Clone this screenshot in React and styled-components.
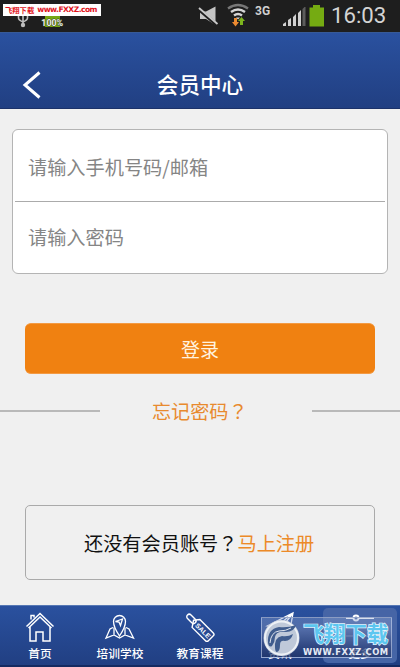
import React from "react";
import styled, { createGlobalStyle } from "styled-components";

const GlobalStyle = createGlobalStyle`
  * {
    box-sizing: border-box;
  }
  body {
    margin: 0;
    font-family: "Noto Sans CJK SC", "Liberation Sans", sans-serif;
    background-color: #f0f0f0;
  }
`;

const Screen = styled.div`
  position: relative;
  display: flex;
  flex-direction: column;
  width: 400px;
  height: 667px;
  overflow: hidden;
  background-color: #f0f0f0;
`;

const StatusBar = styled.div`
  position: relative;
  display: flex;
  justify-content: space-between;
  height: 32px;
  flex: none;
  background-color: #1e1e1e;

  svg {
    display: block;
  }
`;

const StatusRight = styled.div`
  display: flex;
  align-items: flex-start;
`;

const Clock = styled.div`
  width: 69px;
  color: #d4d4d4;
  font-family: Roboto, sans-serif;
  font-size: 22.2px;
  line-height: 31px;
`;

const SiteTag = styled.div`
  position: absolute;
  left: 3px;
  top: 4px;
  width: 98px;
  height: 12px;
  padding-left: 2px;
  display: flex;
  align-items: center;
  gap: 3px;
  background-color: #fff;
  color: #e0131c;
  font-size: 7.3px;
  font-weight: 700;
  line-height: 12px;
  white-space: nowrap;
`;

const SiteTagUrl = styled.span`
  font-family: "DejaVu Sans", sans-serif;
  font-size: 7.6px;
  font-weight: 700;
  letter-spacing: -0.55px;
`;

const Header = styled.header`
  display: grid;
  grid-template-columns: 60px 1fr 60px;
  align-items: center;
  height: 77px;
  flex: none;
  padding-top: 27px;
  border-top: 1px solid #375a97;
  border-bottom: 1px solid #1c3269;
  background: linear-gradient(#2a519f, #213f82);
`;

const BackButton = styled.button`
  padding: 1px 0 0 22px;
  border: none;
  background: none;

  svg {
    display: block;
  }
`;

const Title = styled.h1`
  margin: 0;
  color: #fff;
  font-size: 21.6px;
  font-weight: 500;
  line-height: 30px;
  text-align: center;
`;

const Content = styled.main`
  display: flex;
  flex-direction: column;
  flex: 1;
`;

const Fields = styled.div`
  height: 145px;
  margin: 20px 12px 0;
  padding: 0 2px;
  border: 1px solid #b4b4b4;
  border-radius: 6px;
  background-color: #fff;
`;

const Field = styled.input`
  display: block;
  width: 100%;
  height: ${(props) => (props.$divided ? "72px" : "71px")};
  padding: ${(props) => (props.$divided ? "2px 13px 0" : "0 13px 2px")};
  border: none;
  border-bottom: ${(props) => (props.$divided ? "1px solid #ababab" : "none")};
  outline: none;
  background: none;
  font-family: inherit;
  font-size: 19.2px;

  &::placeholder {
    color: #858585;
    opacity: 1;
  }
`;

const LoginButton = styled.button`
  height: 51px;
  margin: 49px 25px 0;
  padding: 1px 0 0;
  border: none;
  border-top: 1px solid #f39a43;
  border-bottom: 1px solid #f39a43;
  border-radius: 6px;
  background-color: #f08111;
  color: #fff3e0;
  font-family: inherit;
  font-size: 19px;
  line-height: 48px;
`;

const Forgot = styled.div`
  display: grid;
  grid-template-columns: 100px 1fr 88px;
  align-items: center;
  height: 28px;
  margin-top: 23px;
`;

const Rule = styled.span`
  height: 2px;
  background-color: #b9b9b9;
`;

const ForgotLink = styled.a`
  padding-left: 52px;
  color: #e88a2e;
  font-size: 19.1px;
  line-height: 28px;
`;

// the JP face centres the full-width question mark in its cell
const Mark = styled.span`
  font-family: "Noto Sans CJK JP", sans-serif;
`;

const RegisterBox = styled.div`
  display: flex;
  align-items: center;
  height: 75px;
  margin: 80px 25px 0;
  padding: 0 0 0 58px;
  border: 1px solid #aaa;
  border-radius: 5px;
  color: #111;
  font-size: 19.2px;
  white-space: nowrap;
`;

const RegisterLink = styled.a`
  color: #ec8a28;
`;

const TabBar = styled.nav`
  display: grid;
  grid-template-columns: repeat(5, 1fr);
  height: 62px;
  flex: none;
  border-top: 1px solid #5678b4;
  border-bottom: 2px solid #142a61;
  background: linear-gradient(#2a519f, #213f82);
`;

const Tab = styled.a`
  display: flex;
  flex-direction: column;
  align-items: center;
  margin: ${(props) => (props.$active ? "2px 3px" : "2px 0")};
  padding-top: 2px;
  border-radius: 5px;
  background-color: ${(props) => (props.$active ? "#4665a6" : "transparent")};
  color: #fff;
  font-size: 11.7px;
  font-weight: 500;
  line-height: 18px;
  white-space: nowrap;

  svg {
    flex: none;
    margin-bottom: 2px;
  }
`;

const Watermark = styled.div`
  position: absolute;
  left: 261px;
  top: 617px;
  width: 131px;
  height: 41px;
  display: flex;
  align-items: center;
  border: 1px solid rgba(190, 205, 235, 0.65);
  background: linear-gradient(
    rgba(150, 172, 215, 0.35),
    rgba(110, 130, 180, 0.6) 30%,
    rgba(50, 70, 125, 0.75) 75%,
    rgba(30, 50, 100, 0.7)
  );

  svg {
    flex: none;
  }
`;

const WatermarkText = styled.div`
  display: flex;
  flex-direction: column;
  margin-left: 1px;
`;

const WatermarkName = styled.span`
  height: 28px;
  color: #5cc6f0;
  font-size: 21.3px;
  font-weight: 700;
  line-height: 28px;
  white-space: nowrap;
  -webkit-text-stroke: 1.4px #e4f6ff;
  paint-order: stroke fill;
`;

const WatermarkUrl = styled.span`
  color: #e6ebf5;
  font-family: "DejaVu Sans", sans-serif;
  font-size: 8.4px;
  font-weight: 700;
  line-height: 10px;
  letter-spacing: 0.5px;
  white-space: nowrap;
`;

const StatusLeftIcons = () => (
  <svg width="70" height="32" viewBox="0 0 70 32">
    <g fill="none" stroke="#bdbdbd" strokeWidth="1.6">
      <path d="M23 13v12M18.500 15v3q0 2 4.500 4M27.500 15v3q0 2-4.500 4" />
    </g>
    <circle cx="23" cy="25" r="2.200" fill="#bdbdbd" />
    <path d="M45 14h15v13h-15z" fill="#75a813" />
    <text
      x="52.200"
      y="26"
      textAnchor="middle"
      fontFamily="Roboto"
      fontSize="8.800"
      fontWeight="700"
      fill="#eee"
      stroke="#3a4a1a"
      strokeWidth="1"
      paintOrder="stroke"
    >
      100%
    </text>
  </svg>
);

const StatusRightIcons = () => (
  <svg width="136" height="32" viewBox="195 0 136 32">
    <path d="M200 11.500h6l9.500-5v18.500l-9.500-6h-6z" fill="#c4c4c4" />
    <path d="M199 9.500l18 15.500" stroke="#1e1e1e" strokeWidth="3.600" />
    <path d="M199 8l18.500 16" stroke="#c8c8c8" strokeWidth="1.900" />
    <g fill="none" strokeWidth="2.400">
      <path d="M228 8.500q10-7 20 0" stroke="#777" />
      <path d="M231 12q7-5 14 0" stroke="#d5d5d5" />
      <path d="M234 15.500q4-3 8 0" stroke="#d5d5d5" />
    </g>
    <path d="M236 17.500h4l-2 2z" fill="#ddd" />
    <path d="M234 18h3v4h2l-3.500 4.500-3.500-4.500h2z" fill="#ec8b31" />
    <path d="M240 25h3v-4h2l-3.500-4-3.500 4h2z" fill="#7db51d" />
    <text x="255" y="14.500" fontFamily="Roboto" fontSize="12" fontWeight="700" fill="#d0d0d0">
      3G
    </text>
    <path d="M283 26v-2l3-2v4zM288 26v-6l3-2v8zM293 26v-9l3-3v12zM298 26v-13l3-3v16z" fill="#d0d0d0" />
    <path d="M302.500 26v-17l2-2h1v19z" fill="#5c5c5c" />
    <path d="M309.500 7.500h3.500v-2.500h7v2.500h4v19h-14.500z" fill="#75ab12" />
  </svg>
);

const HomeIcon = () => (
  <svg width="30" height="32" viewBox="0 0 30 32" fill="none" stroke="#fff" strokeWidth="1.500">
    <path d="M1.500 16.500L15 3.500l13.500 13M3.500 18L15 7l11.500 11M6 9.500v-4h3v2M5 17v14h6v-9h7v9h7V17" />
  </svg>
);

const MapIcon = () => (
  <svg width="32" height="32" viewBox="0 0 32 32" fill="none" stroke="#fff" strokeWidth="1.300">
    <path d="M15.500 26q-6-9-6-14.500a6 6 0 0 1 12 0q0 5.500-6 14.500z" />
    <path d="M11.500 11.500l7-2.500-2 6.500-1.500-3.500z" />
    <path d="M9 17.500l-3 1.500-4 9 8-3 5.500 3 5.500-3 8.500 3-4.500-9-3-1.500M10 17.500V25M21 17.500V25" />
  </svg>
);

const SaleIcon = () => (
  <svg width="32" height="32" viewBox="0 0 32 32" fill="none" stroke="#fff" strokeWidth="1.400">
    <g transform="translate(3.500 5) rotate(45)">
      <path d="M8 1l4-5h19q2 0 2 2V5q0 2-2 2H12z" transform="translate(0 -1.500)" />
      <rect x="0" y="-2.500" width="11" height="5" rx="2.500" />
      <text
        x="13"
        y="2.600"
        fontFamily="Liberation Sans"
        fontSize="6.800"
        fontWeight="700"
        fill="#fff"
        stroke="none"
      >
        SALE
      </text>
    </g>
  </svg>
);

const NewsIcon = () => (
  <svg width="32" height="32" viewBox="0 0 32 32" fill="none" stroke="#fff" strokeWidth="1.300">
    <path d="M3 16L29 3l-4 23-9-6-5 7v-9zM11 18L29 3 16 20" />
  </svg>
);

const MoreIcon = () => (
  <svg width="36" height="32" viewBox="0 0 36 32" fill="none" stroke="#fff" strokeWidth="1.900">
    <path d="M4 8h7M17 8h15" />
    <circle cx="14" cy="8" r="2.500" />
    <path d="M4 17h18M28 17h4M4 26h7M17 26h15" opacity="0.300" />
  </svg>
);

const WatermarkLogo = () => (
  <svg width="40" height="38" viewBox="0 0 40 38">
    <circle cx="19.500" cy="19" r="18" fill="#bfc9d9" />
    <circle cx="19.500" cy="19" r="16.500" fill="none" stroke="#edf1f6" strokeWidth="2" />
    <path
      d="M6 24Q5 10 17 8q9 1 17-2-2 7-10 7-10-1-11 5 0 5-3 9-3 2-4-3z"
      fill="#405d8e"
    />
    <path d="M13 30q-1-12 7-13 6 1 11-2-2 7-8 7-5-1-5 4 0 6-3 7-2 0-2-5z" fill="#405d8e" />
    <path d="M8 24q1-11 9-12 7 0 12-3" fill="none" stroke="#dde4ee" strokeWidth="1" />
  </svg>
);

const tabs = [
  { label: "首页", Icon: HomeIcon },
  { label: "培训学校", Icon: MapIcon },
  { label: "教育课程", Icon: SaleIcon },
  { label: "资讯", Icon: NewsIcon },
  { label: "更多", Icon: MoreIcon, active: true },
];

const App = () => {
  return (
    <>
      <GlobalStyle />
      <Screen>
        <StatusBar>
          <StatusLeftIcons />
          <StatusRight>
            <StatusRightIcons />
            <Clock>16:03</Clock>
          </StatusRight>
          <SiteTag>
            飞翔下载 <SiteTagUrl>www.FXXZ.com</SiteTagUrl>
          </SiteTag>
        </StatusBar>
        <Header>
          <BackButton aria-label="返回">
            <svg width="20" height="28" viewBox="0 0 20 28">
              <path d="M17.500 1.500L3 14l14.500 12.500" fill="none" stroke="#fff" strokeWidth="3" />
            </svg>
          </BackButton>
          <Title>会员中心</Title>
        </Header>
        <Content>
          <Fields>
            <Field $divided placeholder="请输入手机号码/邮箱" />
            <Field type="password" placeholder="请输入密码" />
          </Fields>
          <LoginButton>登录</LoginButton>
          <Forgot>
            <Rule />
            <ForgotLink>
              忘记密码<Mark>？</Mark>
            </ForgotLink>
            <Rule />
          </Forgot>
          <RegisterBox>
            还没有会员账号<Mark>？</Mark>
            <RegisterLink>马上注册</RegisterLink>
          </RegisterBox>
        </Content>
        <TabBar>
          {tabs.map(({ label, Icon, active }) => (
            <Tab key={label} $active={active}>
              <Icon />
              {label}
            </Tab>
          ))}
        </TabBar>
        <Watermark>
          <WatermarkLogo />
          <WatermarkText>
            <WatermarkName>飞翔下载</WatermarkName>
            <WatermarkUrl>WWW.FXXZ.COM</WatermarkUrl>
          </WatermarkText>
        </Watermark>
      </Screen>
    </>
  );
};

export default App;
